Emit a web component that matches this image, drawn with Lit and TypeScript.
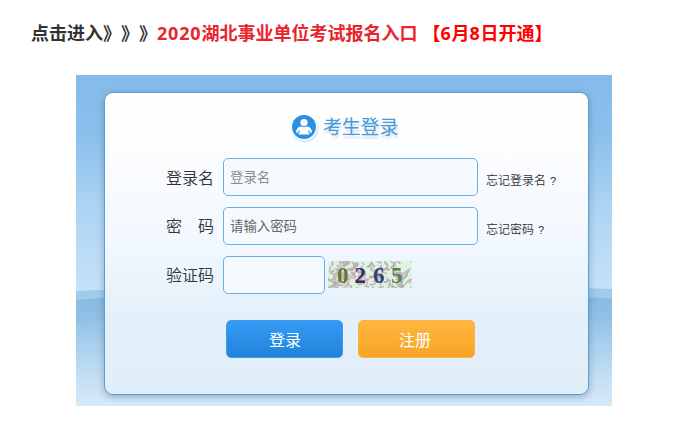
import { LitElement, html, css, svg } from "lit";
import { customElement } from "lit/decorators.js";

@customElement("captcha-code")
class CaptchaCode extends LitElement {
  static styles = css`
    :host { display: block; width: 84px; height: 27px; margin-top: -1px; }
    svg { display: block; }
    text { font: 700 23px "Liberation Serif", serif; }
  `;

  private noise() {
    let seed = 265;
    const next = () => {
      seed = (seed * 16807) % 2147483647;
      return seed / 2147483647;
    };
    const colors = ["#bba3b0", "#b9aeb1", "#c9b3bd", "#a9bda9", "#c2adb8", "#cdbac2", "#e2f6e8"];
    return Array.from({ length: 190 }, (_, i) => {
      const x = next() * 84;
      const y = next() * 27;
      return svg`<path d="M${x} ${y}q${next() * 8 - 4} ${next() * 6 - 3} ${next() * 14 - 7} ${next() * 12 - 6}" fill="none" stroke-width="1.6" stroke=${colors[i % colors.length]}></path>`;
    });
  }

  render() {
    return html`<svg width="84" height="27" viewBox="0 0 84 27">
      <rect width="84" height="27" fill="#dff3e3"></rect>
      ${this.noise()}
      <text x="9" y="21.5" fill="#6c7434">0</text>
      <text x="26.5" y="21.5" fill="#3b2a66">2</text>
      <text x="45" y="21.5" fill="#2c4670">6</text>
      <text x="63" y="21.5" fill="#55804f">5</text>
    </svg>`;
  }
}

@customElement("app-root")
class AppRoot extends LitElement {
  static styles = css`
    :host {
      display: block;
      height: 425px;
      overflow: hidden;
      background: #fff;
      font-family: "Noto Sans CJK SC", sans-serif;
      text-spacing-trim: space-all;
    }
    * { box-sizing: border-box; }
    .headline {
      display: flex;
      margin: 0;
      padding: 18px 0 0 31px;
      height: 75px;
      font-size: 18px;
      line-height: 28px;
      font-weight: 700;
      white-space: pre;
      color: #333;
    }
    .title { color: #e8252d; }
    .date { color: #f00; margin-left: 5px; }
    .num { font-family: "Noto Sans", sans-serif; letter-spacing: 0.8px; }
    .stage {
      position: relative;
      width: 536px;
      height: 331px;
      margin-left: 76px;
      padding: 17px 23px 11px 28px;
    }
    .scene { position: absolute; left: 0; top: 0; }
    .card {
      position: relative;
      width: 485px;
      height: 303px;
      border: 1px solid #5f9ccf;
      border-radius: 9px;
      background: linear-gradient(#fff 0%, #fcfdff 18%, #f2f8fe 48%, #e5f1fa 72%, #e0eef9 100%);
      box-shadow: 0 2px 7px rgba(50, 85, 120, 0.38);
    }
    .brand {
      display: flex;
      align-items: center;
      height: 30px;
      margin: 20px 0 0 185px;
      font-size: 19px;
      line-height: 30px;
      color: #459bdc;
    }
    .brand svg { margin-right: 3px; }
    .brand span { text-shadow: 1px 3px 2px #d8dbdf; letter-spacing: -0.2px; margin-top: -4px; }
    .form {
      display: grid;
      grid-template-columns: 57px 255px auto;
      grid-auto-rows: 38px;
      row-gap: 11px;
      align-items: center;
      margin: 15px 0 0 61px;
      color: #333;
    }
    .label {
      display: flex;
      justify-content: space-between;
      width: 48px;
      height: 38px;
      font-size: 16px;
      line-height: 38px;
      font-weight: 350;
      white-space: nowrap;
    }
    .tight { line-height: 36px; }
    .field {
      width: 255px;
      height: 38px;
      padding: 0 6px;
      border: 1px solid #63b0ea;
      border-radius: 5px;
      background: #f5faff;
      font-size: 13.4px;
      line-height: 34px;
      color: #8b8b8b;
    }
    .dark { color: #666; }
    .short { width: 102px; }
    .row { display: flex; align-items: center; gap: 3px; }
    .link { padding: 4px 0 0 8px; font-size: 12px; font-weight: 350; white-space: nowrap; }
    .q { font-family: "Liberation Sans", sans-serif; font-size: 11px; margin-left: 4px; }
    .actions { display: flex; gap: 15px; margin: 26px 0 0 121px; }
    .button {
      width: 117px;
      height: 38px;
      border-radius: 5px;
      font-size: 16px;
      text-align: center;
      color: #fff;
      padding-left: 1px;
      background: linear-gradient(#339bf4, #2383da);
      border: 1px solid #3f9cec;
      line-height: 37px;
    }
    .orange { background: linear-gradient(#ffb63f, #f7a427); border-color: #fdb240; padding: 0 3px 0 0; }
  `;

  render() {
    return html`
      <h1 class="headline"><span>点击进入》》》</span><span class="title"><span class="num">2020</span>湖北事业单位考试报名入口</span><span class="date">【<span class="num">6</span>月<span class="num">8</span>日开通】</span></h1>
      <div class="stage">
        <svg class="scene" width="536" height="331" viewBox="0 0 536 331">
          <defs>
            <linearGradient id="sky" x2="0" y2="1">
              <stop offset="0" stop-color="#84bbea"></stop>
              <stop offset=".18" stop-color="#8bc0ec"></stop>
              <stop offset=".4" stop-color="#add4f3"></stop>
              <stop offset=".65" stop-color="#c5e2f8"></stop>
            </linearGradient>
            <linearGradient id="sea" gradientUnits="userSpaceOnUse" x1="0" y1="220" x2="0" y2="331">
              <stop offset="0" stop-color="#87badf"></stop>
              <stop offset=".3" stop-color="#94c3e7"></stop>
              <stop offset=".65" stop-color="#b8d9f1"></stop>
              <stop offset="1" stop-color="#d8eaf8"></stop>
            </linearGradient>
          </defs>
          <rect width="536" height="331" fill="url(#sky)"></rect>
          <path d="M0 216Q268 203 536 214V331H0Z" fill="#a1cbea"></path>
          <path d="M0 225Q268 200 536 224V331H0Z" fill="url(#sea)"></path>
          <path d="M0 251L36 245V331H0ZM500 246H536V331H500Z" fill="#d7edff" opacity=".1"></path>
        </svg>
        <div class="card">
          <div class="brand">
            <svg width="30" height="30" viewBox="0 0 30 30">
              <circle cx="15" cy="15.4" r="13.8" fill="#dfe3e7"></circle>
              <circle cx="14" cy="14" r="13.5" fill="#fff"></circle>
              <circle cx="14" cy="14" r="12" fill="#2b8fe6"></circle>
              <circle cx="14" cy="9.5" r="3.6" fill="#fff"></circle>
              <path d="M9.4 13.8Q12 13 14 14.2Q16 13 18.6 13.8Q21.8 15.4 22 19.6H19.4V21.6H8.6V19.6H6Q6.2 15.4 9.4 13.8Z" fill="#fff"></path>
              <path d="M9 20V17.3M19 20V17.3" stroke="#2b8fe6"></path>
            </svg>
            <span>考生登录</span>
          </div>
          <div class="form">
            <div class="label">登录名</div>
            <div class="field">登录名</div>
            <div class="link">忘记登录名<span class="q">?</span></div>
            <div class="label tight"><span>密</span><span>码</span></div>
            <div class="field dark">请输入密码</div>
            <div class="link">忘记密码<span class="q">?</span></div>
            <div class="label tight">验证码</div>
            <div class="row">
              <div class="field short"></div>
              <captcha-code></captcha-code>
            </div>
          </div>
          <div class="actions">
            <div class="button">登录</div>
            <div class="button orange">注册</div>
          </div>
        </div>
      </div>
    `;
  }
}
